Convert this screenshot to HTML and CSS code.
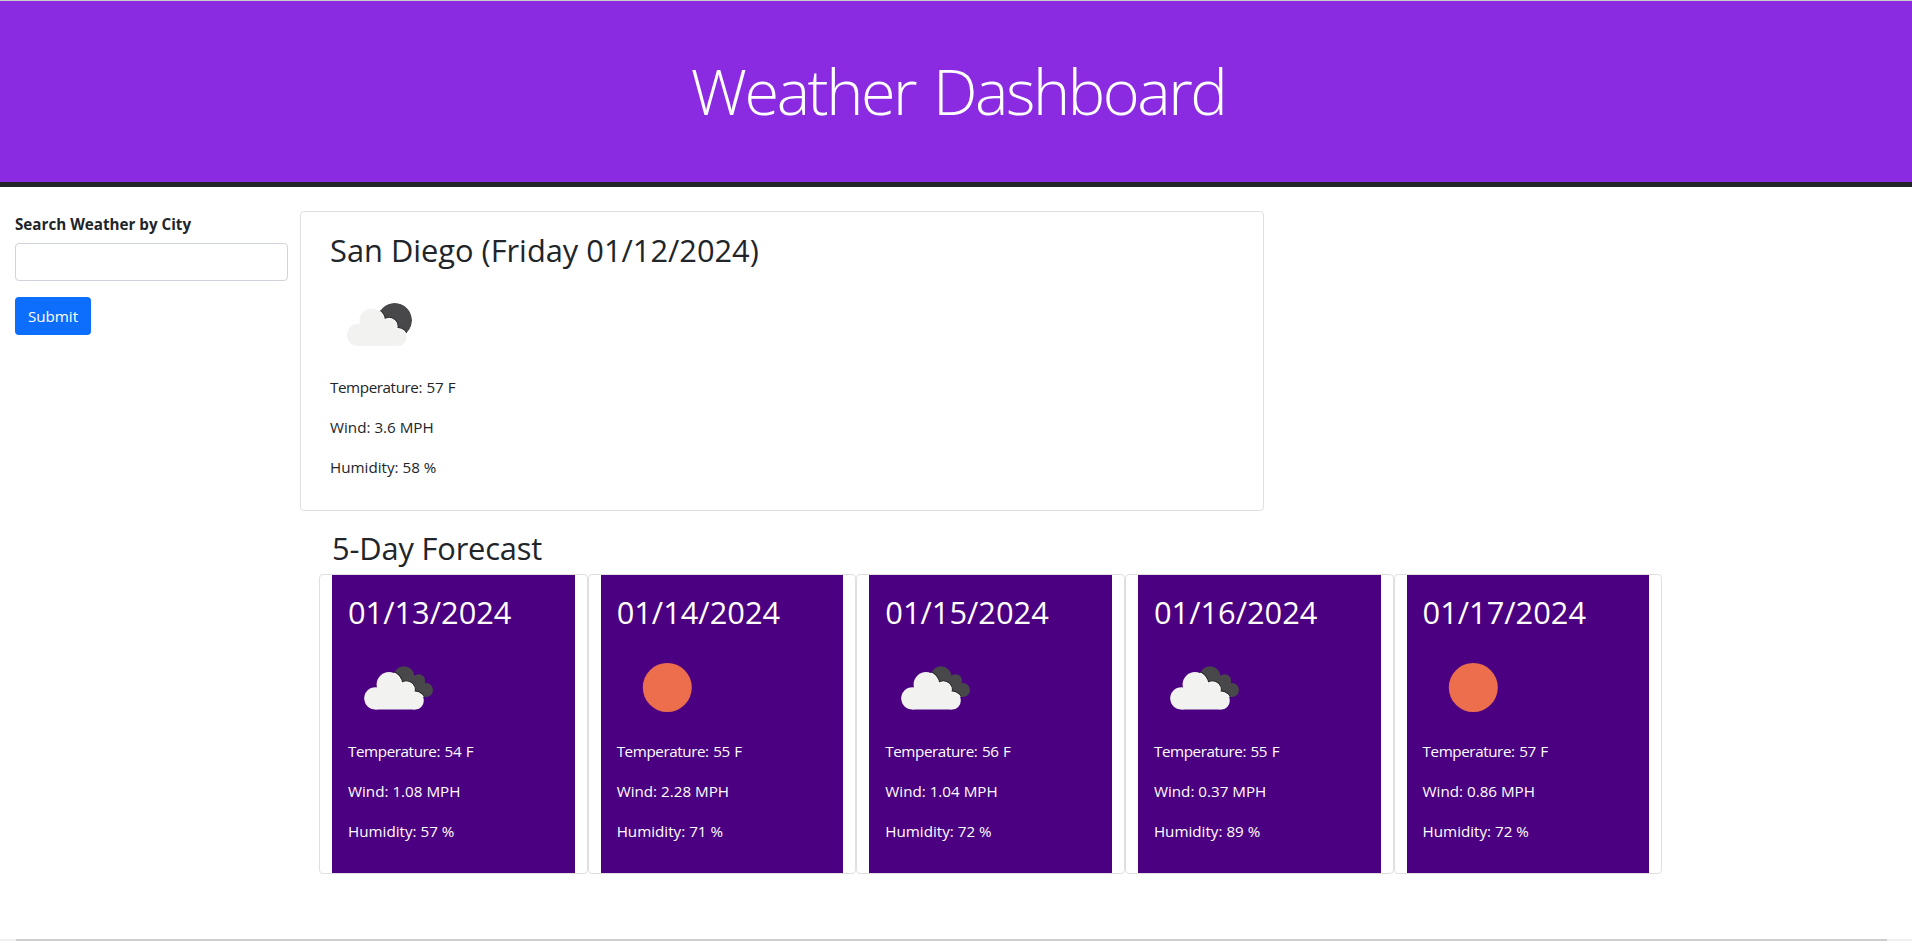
FILE: index.html
```html
<!DOCTYPE html>
<html lang="en">
<head>
<meta charset="utf-8">
<title>Weather Dashboard</title>
<link rel="stylesheet" href="styles.css">
</head>
<body>
<svg class="defs" aria-hidden="true">
  <defs>
    <g id="cloud">
      <circle cx="27.3" cy="60.3" r="11.1"/>
      <circle cx="41" cy="46.5" r="12.4"/>
      <circle cx="58.3" cy="51.8" r="7.8"/>
      <circle cx="67.2" cy="62.8" r="8.6"/>
      <path d="M27.3 71.4V55L41 45l17.3 6 8.9 8v12.4z"/>
    </g>
    <clipPath id="clip-moon"><circle cx="64.7" cy="46.3" r="17.3"/></clipPath>
    <clipPath id="clip-back">
      <circle cx="56" cy="38.6" r="10.4"/>
      <circle cx="70.6" cy="42.7" r="6.5"/>
      <circle cx="78" cy="52" r="7"/>
      <path d="M50 47L56 38l14 4 8 10-2 7-16 0z"/>
    </clipPath>
    <symbol id="few-clouds" viewBox="0 0 100 100">
      <g clip-path="url(#clip-moon)">
        <circle class="dark" cx="64.7" cy="46.3" r="17.3"/>
        <use class="edge-dark" href="#cloud" x="0.8" y="0.6"/>
        <use class="edge-light" href="#cloud" x="0.8" y="0.6"/>
      </g>
      <use class="light" href="#cloud" x="0.8" y="0.6"/>
    </symbol>
    <symbol id="broken-clouds" viewBox="0 0 100 100">
      <g clip-path="url(#clip-back)">
        <rect class="dark" width="100" height="100"/>
        <use class="edge-dark" href="#cloud"/>
        <use class="edge-light" href="#cloud"/>
      </g>
      <use class="light" href="#cloud"/>
    </symbol>
    <symbol id="clear" viewBox="0 0 100 100"><circle class="sun" cx="50.3" cy="49.5" r="24.5"/></symbol>
  </defs>
</svg>

<header class="banner"><h1 class="banner-title">Weather Dashboard</h1></header>

<main class="layout">
  <form class="search">
    <label class="search-label" for="city">Search Weather by City</label>
    <input class="search-input" id="city" type="text">
    <button class="search-button" type="button">Submit</button>
  </form>

  <div class="results">
    <section class="current">
      <h2 class="heading">San Diego (Friday 01/12/2024)</h2>
      <svg class="icon"><use href="#few-clouds"/></svg>
      <p class="stat temperature">Temperature: 57 F</p>
      <p class="stat">Wind: 3.6 MPH</p>
      <p class="stat">Humidity: 58 %</p>
    </section>

    <section class="forecast">
      <h2 class="heading forecast-heading">5-Day Forecast</h2>
      <div class="days">
        <article class="day"><div class="day-body">
          <h2 class="heading">01/13/2024</h2>
          <svg class="icon"><use href="#broken-clouds"/></svg>
          <p class="stat temperature">Temperature: 54 F</p>
          <p class="stat">Wind: 1.08 MPH</p>
          <p class="stat">Humidity: 57 %</p>
        </div></article>
        <article class="day"><div class="day-body">
          <h2 class="heading">01/14/2024</h2>
          <svg class="icon"><use href="#clear"/></svg>
          <p class="stat temperature">Temperature: 55 F</p>
          <p class="stat">Wind: 2.28 MPH</p>
          <p class="stat">Humidity: 71 %</p>
        </div></article>
        <article class="day"><div class="day-body">
          <h2 class="heading">01/15/2024</h2>
          <svg class="icon"><use href="#broken-clouds"/></svg>
          <p class="stat temperature">Temperature: 56 F</p>
          <p class="stat">Wind: 1.04 MPH</p>
          <p class="stat">Humidity: 72 %</p>
        </div></article>
        <article class="day"><div class="day-body">
          <h2 class="heading">01/16/2024</h2>
          <svg class="icon"><use href="#broken-clouds"/></svg>
          <p class="stat temperature">Temperature: 55 F</p>
          <p class="stat">Wind: 0.37 MPH</p>
          <p class="stat">Humidity: 89 %</p>
        </div></article>
        <article class="day"><div class="day-body">
          <h2 class="heading">01/17/2024</h2>
          <svg class="icon"><use href="#clear"/></svg>
          <p class="stat temperature">Temperature: 57 F</p>
          <p class="stat">Wind: 0.86 MPH</p>
          <p class="stat">Humidity: 72 %</p>
        </div></article>
      </div>
    </section>
  </div>
</main>
<div class="scrollbar"><div class="scrollbar-thumb"></div></div>
</body>
</html>
```
FILE: styles.css
```css
* { box-sizing: border-box; }

body {
  margin: 0;
  height: 941px;
  display: flex;
  flex-direction: column;
  overflow: hidden;
  background: #fff;
  color: #212529;
  font-family: "Open Sans", "Noto Sans", sans-serif;
  font-size: 15.2px;
  line-height: 24px;
}

h1, h2, p { margin: 0; }

.defs { position: absolute; width: 0; height: 0; }

.banner {
  height: 187px;
  flex: none;
  display: flex;
  align-items: center;
  justify-content: center;
  padding: 0 0 2px 4px;
  background: #8a2be2;
  border-top: 1px solid #ccc;
  border-bottom: 5px solid #212529;
  color: #fff;
}

.banner-title {
  font-size: 63px;
  font-weight: 300;
  line-height: 77px;
  letter-spacing: -2.45px;
  word-spacing: 4px;
}

.layout { display: flex; flex: 1; }

.search {
  width: 300px;
  padding: 25px 12px 0 15px;
  display: flex;
  flex-direction: column;
  align-items: flex-start;
}

.search-label { font-weight: 700; margin-bottom: 7px; }

.search-input {
  width: 273px;
  height: 38px;
  margin: 0 0 16px;
  border: 1px solid #ced4da;
  border-radius: 4px;
  background: #fff;
}

.search-button {
  height: 38px;
  width: 76px;
  padding: 0;
  border: 0;
  border-radius: 4px;
  background: #0d6efd;
  color: #fff;
  font: inherit;
}

.results { padding-top: 24px; }

.current {
  width: 964px;
  height: 300px;
  padding: 16px 29px;
  border: 1px solid #dfdfdf;
  border-radius: 4px;
}

.heading {
  margin-bottom: 8px;
  padding-top: 6px;
  font-size: 30.8px;
  font-weight: 400;
  line-height: 32.4px;
}

.icon { display: block; width: 100px; height: 100px; margin-bottom: 1px; }

.stat { margin-bottom: 16px; }

.temperature { letter-spacing: -0.4px; word-spacing: 1px; }

.forecast { padding: 16.6px 0 0 19px; }

.forecast .heading { padding-top: 3px; line-height: 35.4px; }

.forecast .forecast-heading { padding-left: 13px; letter-spacing: -0.15px; }

.days { display: flex; width: 1343.2px; }

.day {
  flex: 1;
  height: 300px;
  padding: 0 12px;
  border: 1px solid #dfdfdf;
  border-radius: 4px;
}

.day-body {
  height: 100%;
  padding: 16.6px 16px 0;
  background: #4b0082;
  color: #fff;
}

.dark { fill: #48484a; }
.light { fill: #f2f2f0; }
.sun { fill: #ec6e4c; }
.edge-dark { fill: #222224; stroke: #222224; stroke-width: 3.2px; }
.edge-light { fill: #fff; stroke: #fff; stroke-width: 1.6px; }

.scrollbar { height: 2px; flex: none; padding: 0 25px 0 16px; background: #f0f0f0; }
.scrollbar-thumb { height: 2px; background: #cdcdcd; }
```
